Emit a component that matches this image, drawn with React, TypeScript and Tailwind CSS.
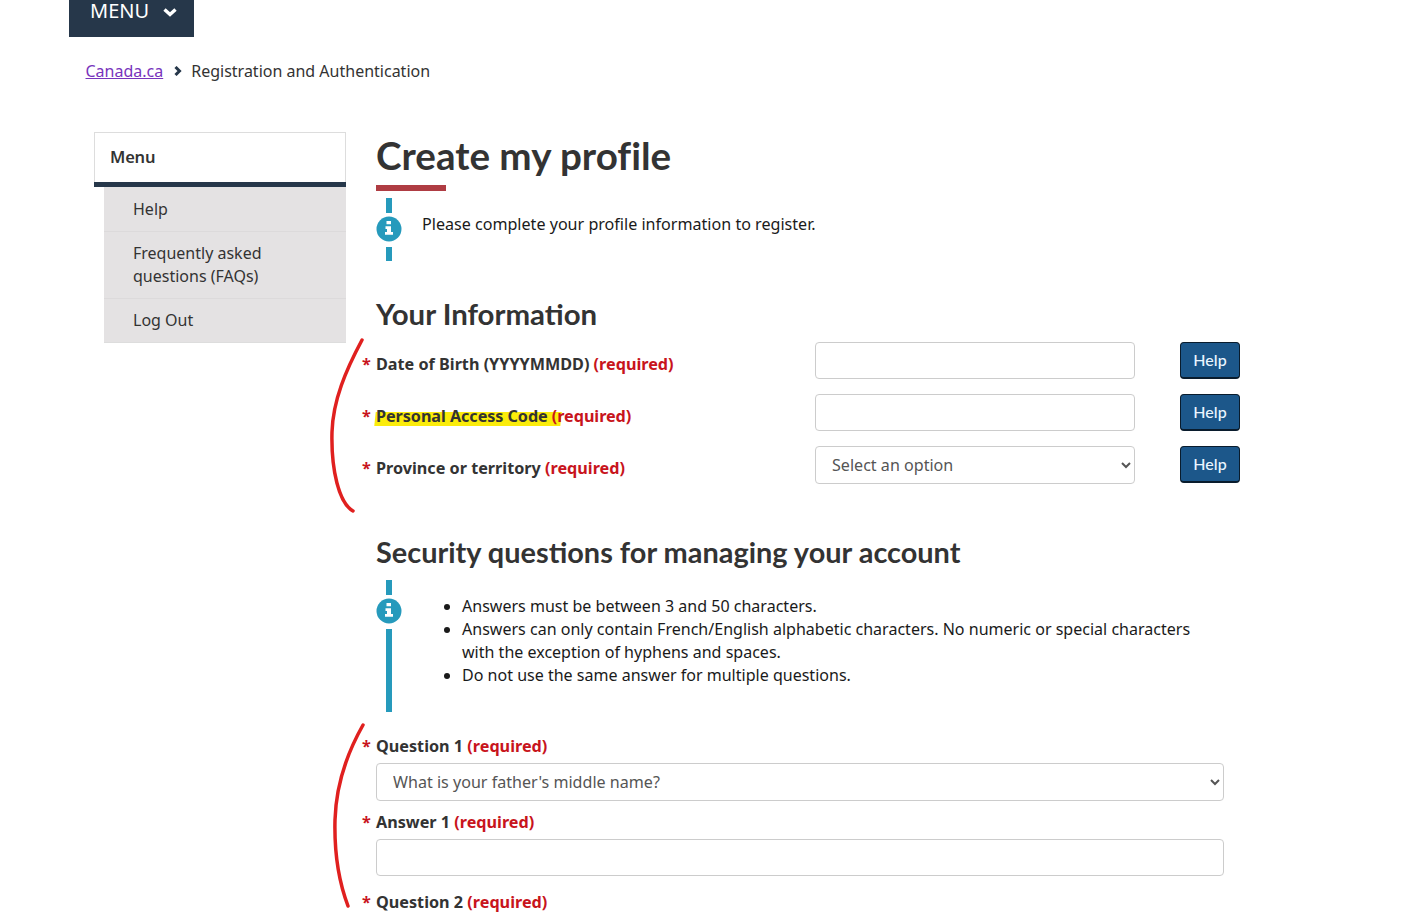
const menuLinks = ['Help', 'Frequently asked questions (FAQs)', 'Log Out'];

const rules = [
  'Answers must be between 3 and 50 characters.',
  'Answers can only contain French/English alphabetic characters. No numeric or special characters with the exception of hyphens and spaces.',
  'Do not use the same answer for multiple questions.',
];

function Required({ label, highlight = false }: { label: string; highlight?: boolean }) {
  return (
    <label className={`relative isolate block font-bold text-[16.2px] leading-[24px] text-[#333] whitespace-nowrap ${highlight ? 'tracking-[-0.06px]' : ''}`}>
      <span className="absolute left-[-14px] top-0 text-[#c8141c]">*</span>
      {highlight && (
        <span className="absolute left-[-1px] top-[8px] -z-10 h-[14px] w-[186px] -skew-x-6 bg-[#fbec0b]" />
      )}
      {label} <span className="text-[#c8141c]">(required)</span>
    </label>
  );
}

function InfoBar({ bottomBar }: { bottomBar: string }) {
  return (
    <div className="flex w-[26px] shrink-0 flex-col items-center">
      <div className="h-[15px] w-[6px] bg-[#269abc]" />
      <svg className="mb-[5px] mt-[3px] shrink-0" width="26" height="26" viewBox="0 0 26 26">
        <circle cx="13" cy="13" r="12.5" fill="#269abc" />
        <path d="M10.5 5h4.5v3.2h-4.5zM9.5 10.2H15V16h2v2.8H9v-2.8h2v-3H9.500z" fill="#fff" />
      </svg>
      <div className={`w-[6px] bg-[#269abc] ${bottomBar}`} />
    </div>
  );
}

function HelpButton() {
  return (
    <button className="h-[37px] w-[60px] rounded-[4px] border border-[#091c2d] border-b-2 bg-[#1c578a] text-[16px] text-[#eaf6ff] font-['Lato'] font-medium">
      Help
    </button>
  );
}

const inputClass = 'block h-[37px] rounded-[4px] border border-[#ccc] bg-white';
const selectClass = 'block h-[38px] rounded-[4px] border border-[#ccc] bg-white px-3 text-[16.1px] text-[#555]';

export default function App() {
  return (
    <div className="relative h-[919px] overflow-hidden bg-white font-['Noto_Sans',sans-serif] text-[#333]">
      {/* Top menu */}
      <div className="ml-[69px] flex h-[37px] w-[125px] items-start bg-[#26374a] pl-[21px] text-[20px] leading-[22px] text-white">
        MENU
        <svg className="ml-[14px] mt-[8px]" width="14" height="9" viewBox="0 0 14 9" fill="none" stroke="#fff" strokeWidth="3.4">
          <polyline points="1.500,1.500 7,6.500 12.500,1.500" />
        </svg>
      </div>

      {/* Breadcrumb */}
      <div className="ml-[85.5px] mt-[22px] flex items-center text-[16px] leading-[24px]">
        <a href="#" className="text-[#7834bc] underline">Canada.ca</a>
        <svg className="ml-[11px] mr-[9px]" width="8" height="10" viewBox="0 0 8 10" fill="none" stroke="#26374a" strokeWidth="3">
          <polyline points="1.500,1 5.500,5 1.500,9" />
        </svg>
        <span>Registration and Authentication</span>
      </div>

      <div className="ml-[94px] mt-[49px] flex">
        {/* Sidebar */}
        <aside className="w-[252px] shrink-0 self-start">
          <div className="flex h-[50px] items-center border border-b-0 border-[#ddd] pl-[15px] text-[16.500px] font-semibold tracking-[-0.2px]">Menu</div>
          <div className="h-[5px] bg-[#26374a]" />
          <ul className="ml-[10px] border-b border-[#ddd] bg-[#e4e2e3] pt-px">
            {menuLinks.map((link, i) => (
              <li
                key={link}
                className={`py-[10px] pl-[29px] pr-[50px] text-[16px] leading-[23px] ${i > 0 ? 'border-t border-[#dcdadb]' : ''}`}
              >
                {link}
              </li>
            ))}
          </ul>
        </aside>

        {/* Main content */}
        <main className="ml-[30px] w-[848px] shrink-0">
          <h1 className="-mt-[1px] mb-[6px] font-['Lato'] text-[38.6px] font-bold leading-[48px] [font-variant-ligatures:none]">Create my profile</h1>
          <div className="h-[6px] w-[70px] bg-[#af3c43]" />

          <div className="mt-[7px] flex">
            <InfoBar bottomBar="h-[14px]" />
            <p className="ml-[20px] mt-[14px] text-[16.1px] leading-[24px] text-[#1a1a1a]">
              Please complete your profile information to register.
            </p>
          </div>

          <h2 className="mt-[35px] font-['Lato'] text-[29.4px] font-bold leading-[36px]">Your Information</h2>

          <div className="mt-[9px] flex w-[864px] flex-col gap-[15px] pt-px">
            {[
              { label: 'Date of Birth (YYYYMMDD)' },
              { label: 'Personal Access Code', highlight: true },
              { label: 'Province or territory', select: true },
            ].map((row) => (
              <div key={row.label} className="flex items-start">
                <div className="w-[439px] shrink-0 pt-[10px]">
                  <Required label={row.label} highlight={row.highlight} />
                </div>
                {row.select ? (
                  <select className={`${selectClass} w-[320px] shrink-0`}>
                    <option>Select an option</option>
                  </select>
                ) : (
                  <input className={`${inputClass} w-[320px] shrink-0`} />
                )}
                <div className="ml-[45px]">
                  <HelpButton />
                </div>
              </div>
            ))}
          </div>

          <h2 className="mt-[50px] font-['Lato'] text-[28.9px] font-bold leading-[36px]">Security questions for managing your account</h2>

          <div className="mt-[10px] flex">
            <InfoBar bottomBar="h-[83px]" />
            <ul className="ml-[60px] mt-[15px] w-[740px] list-disc text-[16.05px] leading-[23px] text-[#1a1a1a]">
              {rules.map((rule) => (
                <li key={rule}>{rule}</li>
              ))}
            </ul>
          </div>

          <div className="mt-[22px]">
            <Required label="Question 1" />
          </div>
          <select className={`${selectClass} mt-[5px] w-full`}>
            <option>What is your father's middle name?</option>
          </select>
          <div className="mt-[9px]">
            <Required label="Answer 1" />
          </div>
          <input className={`${inputClass} mt-[5px] w-full`} />
          <div className="mt-[14px]">
            <Required label="Question 2" />
          </div>
        </main>
      </div>

      {/* Hand drawn red marks on the screenshot */}
      <svg className="pointer-events-none absolute inset-0" width="1403" height="919" fill="none" stroke="#e0201f" strokeWidth="3.500" strokeLinecap="round">
        <path d="M362 340 C346 370 333 400 332 432 C331 470 339 503 353 511" />
        <path d="M363 725 C346 755 336 785 335 820 C334 860 340 885 348 906" />
      </svg>
    </div>
  );
}
